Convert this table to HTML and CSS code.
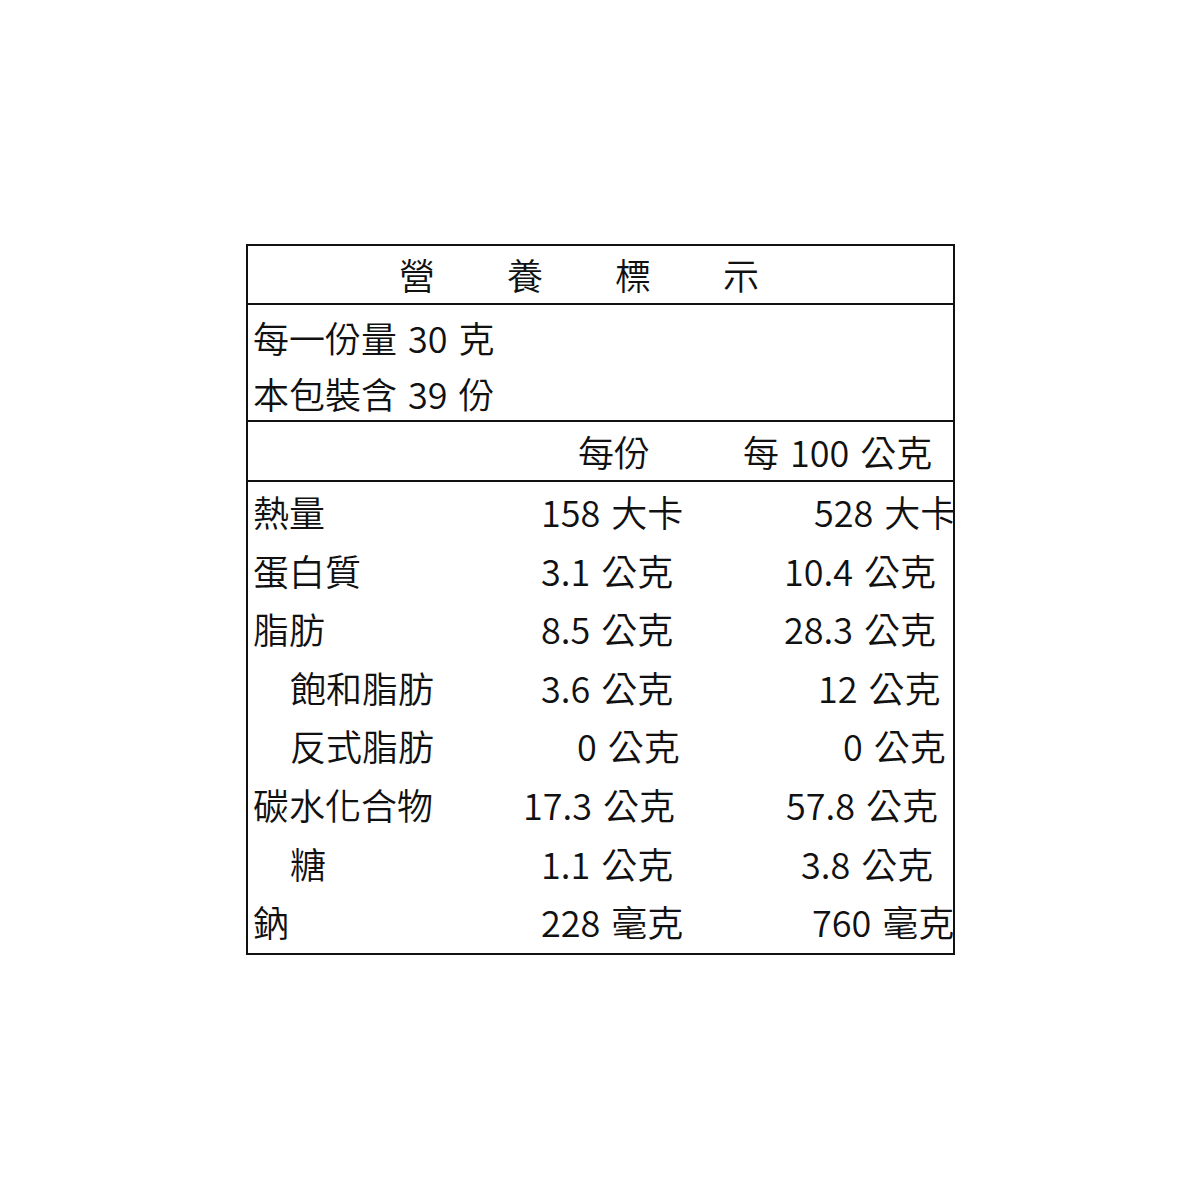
FILE: index.html
```html
<!DOCTYPE html>
<html lang="zh-Hant">
<head>
<meta charset="utf-8">
<title>營養標示</title>
<link rel="stylesheet" href="styles.css">
</head>
<body>
<div class="label">
  <div class="title">
    <span>營</span><span>養</span><span>標</span><span>示</span>
  </div>
  <div class="serving">
    <div class="line">每一份量 30 克</div>
    <div class="line">本包裝含 39 份</div>
  </div>
  <div class="head row">
    <div class="name"></div>
    <div class="c2"><span class="h2">每份</span></div>
    <div class="c3"><span class="h3">每 100 公克</span></div>
  </div>
  <div class="data">
    <div class="row">
      <div class="name">熱量</div>
      <div class="c2"><span class="a18">158 大卡</span></div>
      <div class="c3"><span class="b30">528 大卡</span></div>
    </div>
    <div class="row">
      <div class="name">蛋白質</div>
      <div class="c2"><span class="a18">3.1 公克</span></div>
      <div class="c3"><span class="b0">10.4 公克</span></div>
    </div>
    <div class="row">
      <div class="name">脂肪</div>
      <div class="c2"><span class="a18">8.5 公克</span></div>
      <div class="c3"><span class="b0">28.3 公克</span></div>
    </div>
    <div class="row">
      <div class="name sub">飽和脂肪</div>
      <div class="c2"><span class="a18">3.6 公克</span></div>
      <div class="c3"><span class="b35">12 公克</span></div>
    </div>
    <div class="row">
      <div class="name sub">反式脂肪</div>
      <div class="c2"><span class="a53">0 公克</span></div>
      <div class="c3"><span class="b60">0 公克</span></div>
    </div>
    <div class="row">
      <div class="name">碳水化合物</div>
      <div class="c2"><span class="a0">17.3 公克</span></div>
      <div class="c3"><span class="b3">57.8 公克</span></div>
    </div>
    <div class="row">
      <div class="name sub">糖</div>
      <div class="c2"><span class="a18">1.1 公克</span></div>
      <div class="c3"><span class="b17">3.8 公克</span></div>
    </div>
    <div class="row">
      <div class="name">鈉</div>
      <div class="c2"><span class="a18">228 毫克</span></div>
      <div class="c3"><span class="b28">760 毫克</span></div>
    </div>
  </div>
</div>
</body>
</html>
```
FILE: styles.css
```css
html, body {
  margin: 0;
  padding: 0;
  background: #fff;
}

body {
  font-family: "Noto Sans CJK TC", "Noto Sans", sans-serif;
  font-weight: 350;
  color: #111;
  font-size: 36px;
  word-spacing: 3px;
}

.label {
  margin: 244px 0 0 246px;
  width: 709px;
  height: 711px;
  box-sizing: border-box;
  border: 2px solid #111;
  overflow: hidden;
  display: flex;
  flex-direction: column;
}

.title {
  height: 57px;
  display: flex;
  align-items: center;
  gap: 72px;
  padding-left: 151px;
  border-bottom: 2px solid #111;
  line-height: 57px;
}

.serving {
  height: 117px;
  box-sizing: border-box;
  padding: 4px 0 0 5px;
  border-bottom: 2px solid #111;
}

.serving .line {
  height: 56px;
  line-height: 56px;
  white-space: nowrap;
}

.row {
  display: grid;
  grid-template-columns: 277px 260px 1fr;
  height: 58.6px;
  line-height: 58.6px;
  white-space: nowrap;
}

.head {
  height: 58px;
  line-height: 58px;
  border-bottom: 2px solid #111;
}

.data {
  flex: 1;
}

.name {
  padding-left: 5px;
}

.name.sub {
  padding-left: 42px;
}

.h2 { margin-left: 53px; }
.h3 { margin-left: -42px; }

.a0 { margin-left: -2px; }
.a18 { margin-left: 16px; }
.a53 { margin-left: 52px; }

.b0 { margin-left: -1px; }
.b3 { margin-left: 1px; }
.b17 { margin-left: 16px; }
.b28 { margin-left: 27px; }
.b30 { margin-left: 29px; }
.b35 { margin-left: 33px; }
.b60 { margin-left: 58px; }
```
